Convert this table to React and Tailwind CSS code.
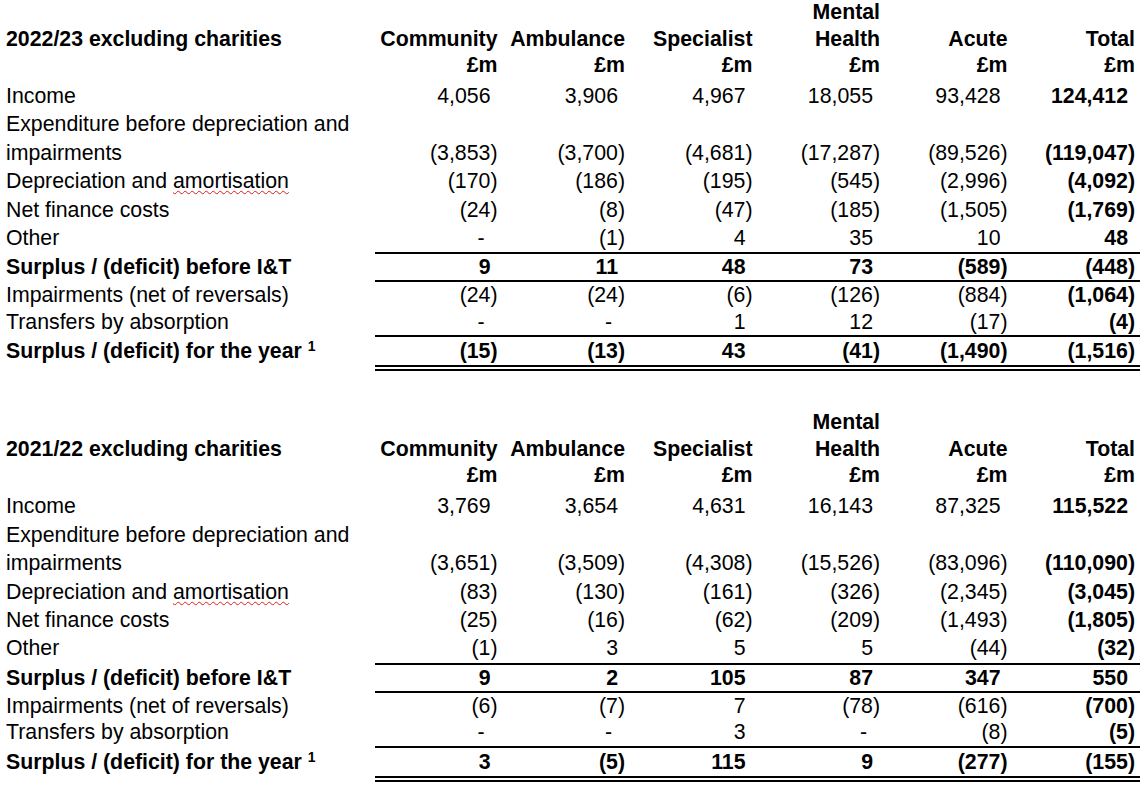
import React from 'react';

const cols = [['', 'Community'], ['', 'Ambulance'], ['', 'Specialist'], ['Mental', 'Health'], ['', 'Acute'], ['', 'Total']];

// row spacing follows the Word table: body rows a touch taller, rows under rules a touch shorter
const tables = [
    {
        title: '2022/23 excluding charities',
        rows: [
            { label: 'Income', values: ['4,056', '3,906', '4,967', '18,055', '93,428', '124,412'] },
            { label: 'Expenditure before depreciation and', label2: 'impairments', values: ['(3,853)', '(3,700)', '(4,681)', '(17,287)', '(89,526)', '(119,047)'] },
            { label: 'Depreciation and', squiggle: 'amortisation', values: ['(170)', '(186)', '(195)', '(545)', '(2,996)', '(4,092)'] },
            { label: 'Net finance costs', values: ['(24)', '(8)', '(47)', '(185)', '(1,505)', '(1,769)'] },
            { label: 'Other', values: ['-', '(1)', '4', '35', '10', '48'] },
            { label: 'Surplus / (deficit) before I&T', kind: 'sub', values: ['9', '11', '48', '73', '(589)', '(448)'] },
            { label: 'Impairments (net of reversals)', kind: 'after', values: ['(24)', '(24)', '(6)', '(126)', '(884)', '(1,064)'] },
            { label: 'Transfers by absorption', kind: 'short', values: ['-', '-', '1', '12', '(17)', '(4)'] },
            { label: 'Surplus / (deficit) for the year', sup: '1', kind: 'total', values: ['(15)', '(13)', '43', '(41)', '(1,490)', '(1,516)'] },
        ],
    },
    {
        title: '2021/22 excluding charities',
        rows: [
            { label: 'Income', values: ['3,769', '3,654', '4,631', '16,143', '87,325', '115,522'] },
            { label: 'Expenditure before depreciation and', label2: 'impairments', values: ['(3,651)', '(3,509)', '(4,308)', '(15,526)', '(83,096)', '(110,090)'] },
            { label: 'Depreciation and', squiggle: 'amortisation', values: ['(83)', '(130)', '(161)', '(326)', '(2,345)', '(3,045)'] },
            { label: 'Net finance costs', values: ['(25)', '(16)', '(62)', '(209)', '(1,493)', '(1,805)'] },
            { label: 'Other', values: ['(1)', '3', '5', '5', '(44)', '(32)'] },
            { label: 'Surplus / (deficit) before I&T', kind: 'sub', values: ['9', '2', '105', '87', '347', '550'] },
            { label: 'Impairments (net of reversals)', kind: 'after', values: ['(6)', '(7)', '7', '(78)', '(616)', '(700)'] },
            { label: 'Transfers by absorption', kind: 'short', values: ['-', '-', '3', '-', '(8)', '(5)'] },
            { label: 'Surplus / (deficit) for the year', sup: '1', kind: 'total', values: ['3', '(5)', '115', '9', '(277)', '(155)'] },
        ],
    },
];

const rowStyles = {
    body: { line: 'leading-[28.4px]', rule: '', bold: false },
    sub: { line: 'leading-[26px]', rule: 'border-t-2', bold: true },
    after: { line: 'leading-[26.5px]', rule: 'border-t-2', bold: false },
    short: { line: 'leading-[26.5px]', rule: '', bold: false },
    total: { line: 'leading-[28px] pb-[2px]', rule: 'border-t-2 border-b-[6px] border-double', bold: true },
};

const Num = ({ v }) => {
    if (v === '-') return <span className="pr-[13px]">-</span>;
    if (v.startsWith('(')) return <span>{v}</span>;
    return <span className="pr-[7px]">{v}</span>;
};

const Row = ({ row }) => {
    const s = rowStyles[row.kind || 'body'];
    return (
        <div className={`grid grid-cols-[375px_repeat(6,127.5px)] ${s.line} ${s.bold ? 'font-bold' : ''}`}>
            <div className={`pl-[6px] flex flex-col justify-start border-transparent ${s.rule}`}>
                <div className="whitespace-nowrap">
                    {row.label}
                    {row.squiggle && (
                        <>
                            {' '}
                            <span className="underline decoration-wavy decoration-[#e01b1b] decoration-1 underline-offset-[2px]">
                                {row.squiggle}
                            </span>
                        </>
                    )}
                    {row.sup && (
                        <>
                            {' '}
                            <sup className="text-[14px] leading-none">{row.sup}</sup>
                        </>
                    )}
                </div>
                {row.label2 && <div>{row.label2}</div>}
            </div>
            {row.values.map((v, i) => (
                <div
                    key={i}
                    className={`pr-[5px] flex items-end justify-end border-black ${s.rule} ${i === 5 ? 'font-bold' : ''}`}
                >
                    <Num v={v} />
                </div>
            ))}
        </div>
    );
};

const Table = ({ table }) => (
    <div>
        <div className="grid grid-cols-[375px_repeat(6,127.5px)] leading-[26.5px] font-bold h-[83px] -mt-px">
            <div className="pl-[6px]">
                <div>&nbsp;</div>
                <div>{table.title}</div>
            </div>
            {cols.map((c, i) => (
                <div key={i} className="pr-[5px] text-right">
                    <div>{c[0] || '\u00a0'}</div>
                    <div>{c[1]}</div>
                    <div>£m</div>
                </div>
            ))}
        </div>
        {table.rows.map((r, i) => (
            <Row key={i} row={r} />
        ))}
    </div>
);

export default function App() {
    return (
        <div className="w-[1147px] h-[792px] bg-white text-black text-[21.3px] font-['Liberation_Sans',Arial,sans-serif] overflow-hidden">
            <Table table={tables[0]} />
            <div className="mt-[37px]">
                <Table table={tables[1]} />
            </div>
        </div>
    );
}
